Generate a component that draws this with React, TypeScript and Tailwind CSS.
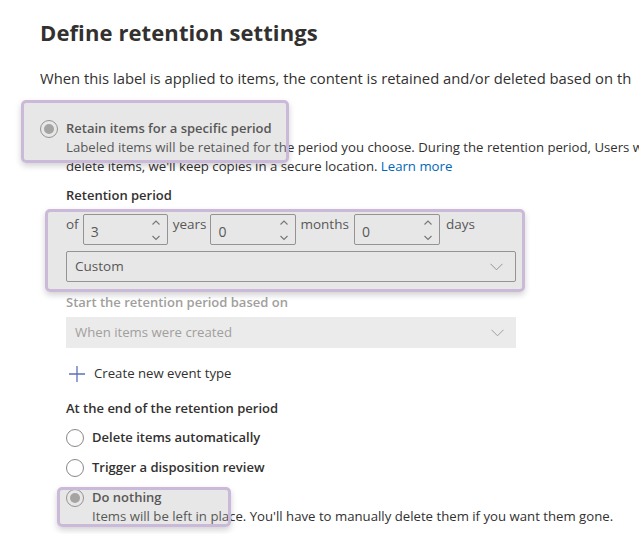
import React from "react";

const font = { fontFamily: '"Open Sans", "Noto Sans", sans-serif' };

function Radio({ disabled }: { disabled?: boolean }) {
  return (
    <span className="w-[18px] h-[18px] rounded-full border border-[#8a8886] bg-white flex items-center justify-center shrink-0">
      {disabled ? <span className="w-[10px] h-[10px] rounded-full bg-[#a19f9d]" /> : null}
    </span>
  );
}

function Spin({ value, w }: { value: string; w: string }) {
  return (
    <div className={`${w} h-[31px] border border-[#8a8886] rounded-[2px] bg-white flex items-center justify-between pl-[7px] pr-[6px]`}>
      <span className="text-[14px] text-[#323130] pt-[3px]">{value}</span>
      <svg width="10" height="24" viewBox="0 0 10 24" fill="none" stroke="#605e5c" strokeWidth="1.1">
        <path d="M1.5 6.5 L5 3 L8.5 6.5" />
        <path d="M1.5 18 L5 21.5 L8.5 18" />
      </svg>
    </div>
  );
}

function Chevron({ color }: { color: string }) {
  return (
    <svg width="13" height="8" viewBox="0 0 13 8" fill="none" stroke={color} strokeWidth="1">
      <path d="M0.5 0.8 L6.5 6.8 L12.5 0.8" />
    </svg>
  );
}

function Highlight({ cls }: { cls: string }) {
  return (
    <div
      className={`absolute ${cls} rounded-[5px] border-[3px] border-[#cbb9d9] bg-[rgba(175,175,175,0.3)] shadow-[0_3px_6px_rgba(0,0,0,0.18)]`}
    />
  );
}

export default function App() {
  return (
    <div className="relative w-[639px] h-[534px] bg-white overflow-hidden text-[#323130]" style={font}>
      <div className="pl-[40px] pt-[15px] whitespace-nowrap">
        <h1 className="text-[22px] font-bold leading-[34px] tracking-[0.1px]">Define retention settings</h1>
        <p className="mt-[19px] text-[14.8px] leading-[20px]">
          When this label is applied to items, the content is retained and/or deleted based on th
        </p>

        <div className="mt-[31px] flex items-start gap-[8px]">
          <div className="pt-[1px]">
            <Radio disabled />
          </div>
          <div>
            <div className="text-[13px] font-semibold leading-[19px] text-[#323130]">Retain items for a specific period</div>
            <div className="text-[13.2px] leading-[19px] text-[#323130]">
              Labeled items will be retained for the period you choose. During the retention period, Users w
            </div>
            <div className="text-[13.2px] leading-[19px] text-[#323130]">
              delete items, we'll keep copies in a secure location. <span className="text-[#0068b8]">Learn more</span>
            </div>

            <div className="mt-[10px] text-[13px] font-semibold leading-[19px]">Retention period</div>

            <div className="mt-[9px] flex items-start text-[13.5px]">
              <span className="leading-[19px] pt-[1px] mr-[4px]">of</span>
              <Spin value="3" w="w-[85px]" />
              <span className="leading-[19px] pt-[1px] ml-[5px] mr-[4px]">years</span>
              <Spin value="0" w="w-[86px]" />
              <span className="leading-[19px] pt-[1px] ml-[4px] mr-[5px]">months</span>
              <Spin value="0" w="w-[86px]" />
              <span className="leading-[19px] pt-[1px] ml-[6px]">days</span>
            </div>

            <div className="mt-[6px] w-[450px] h-[31px] border border-[#8a8886] rounded-[2px] bg-white flex items-center justify-between pl-[8px] pr-[12px]">
              <span className="text-[13.5px]">Custom</span>
              <Chevron color="#8a8886" />
            </div>

            <div className="mt-[11px] text-[13px] font-semibold leading-[19px] text-[#a19f9d]">
              Start the retention period based on
            </div>
            <div className="mt-[5px] w-[450px] h-[31px] bg-[#ebebeb] flex items-center justify-between pl-[9px] pr-[12px]">
              <span className="text-[13.2px] text-[#a19f9d]">When items were created</span>
              <Chevron color="#a19f9d" />
            </div>

            <div className="mt-[16px] flex items-center h-[20px]">
              <svg width="16" height="16" viewBox="0 0 16 16" className="ml-[3px]" stroke="#5b72b8" strokeWidth="1.3">
                <path d="M8 0 V16 M0 8 H16" />
              </svg>
              <span className="ml-[9px] text-[13.2px]">Create new event type</span>
            </div>

            <div className="mt-[15px] text-[13px] font-semibold leading-[19px]">At the end of the retention period</div>

            <div className="mt-[10px] flex items-center gap-[8px] h-[20px]">
              <Radio />
              <span className="text-[13px] font-semibold">Delete items automatically</span>
            </div>
            <div className="mt-[10px] flex items-center gap-[8px] h-[20px]">
              <Radio />
              <span className="text-[13px] font-semibold">Trigger a disposition review</span>
            </div>
            <div className="mt-[10px] flex items-start gap-[8px]">
              <div className="pt-[1px]">
                <Radio disabled />
              </div>
              <div>
                <div className="text-[13px] font-semibold leading-[19px] text-[#323130]">Do nothing</div>
                <div className="text-[13.2px] leading-[19px]">
                  Items will be left in place. You'll have to manually delete them if you want them gone.
                </div>
              </div>
            </div>
          </div>
        </div>
      </div>

      <Highlight cls="left-[21px] top-[100px] w-[268px] h-[63px]" />
      <Highlight cls="left-[45px] top-[209px] w-[480px] h-[83px]" />
      <Highlight cls="left-[57px] top-[487px] w-[174px] h-[40px]" />
    </div>
  );
}
